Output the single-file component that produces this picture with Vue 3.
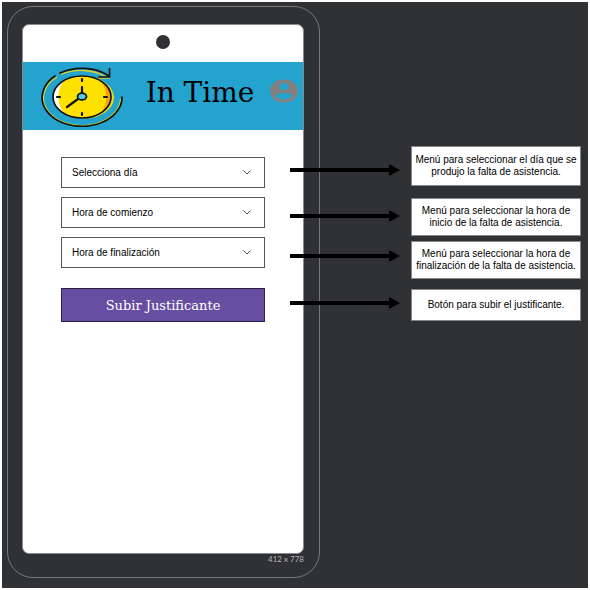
<script setup>
import { ref } from 'vue'

const fields = ref([
  { id: 'dia', label: 'Selecciona día', value: '' },
  { id: 'comienzo', label: 'Hora de comienzo', value: '' },
  { id: 'fin', label: 'Hora de finalización', value: '' }
])

const notes = [
  { text: ['Menú para seleccionar el día que se', 'produjo la falta de asistencia.'] },
  { text: ['Menú para seleccionar la hora de', 'inicio de la falta de asistencia.'] },
  { text: ['Menú para seleccionar la hora de', 'finalización de la falta de asistencia.'] },
  { text: ['Botón para subir el justificante.'] }
]
</script>

<template>
  <main class="board">
    <section class="phone">
      <div class="screen">
        <div class="status"><span class="camera"></span></div>
        <header class="bar">
          <svg class="logo" viewBox="0 0 84 62" fill="none" aria-hidden="true">
            <g stroke="#d8d422" stroke-width="1.3">
              <path d="M17 12A38.600 27.600 0 1 0 80.600 34" />
              <path d="M21 9.400A38.600 27.600 0 0 1 66 12" />
              <path d="M58 13.200h12" />
            </g>
            <ellipse cx="44.500" cy="32.500" rx="29.500" ry="21" fill="#e8dc10" />
            <ellipse cx="42" cy="32" rx="29" ry="21" fill="#ffe100" />
            <path d="M25 15C10 22 10 42 25 49C16 40 16 24 25 15Z" fill="#fff" />
            <path d="M61 16C74 24 74 40 61 48C68 38 68 26 61 16Z" fill="#ff9d13" />
            <g stroke="#111" stroke-width="1.7" stroke-linecap="round">
              <ellipse cx="42" cy="32" rx="29" ry="21" />
              <path d="M15 11A40 29 0 1 0 82 32" />
              <path d="M20 8A40 29 0 0 1 69 11" />
              <path d="M69.500 3.500V12H59" />
              <path d="M42 14v2M42 48v2M17 32h3M64 32h3M42 22v6M38 34 27 42" stroke-width="2.200" />
              <ellipse cx="42" cy="31.500" rx="4.500" ry="3.400" fill="#55cbe8" />
            </g>
          </svg>
          <h1 class="title">In Time</h1>
          <svg class="avatar" viewBox="0 0 28 24" aria-hidden="true">
            <ellipse cx="14" cy="12" rx="14" ry="11.500" fill="#808080" />
            <ellipse cx="14" cy="7.500" rx="4.200" ry="3.500" fill="#24a3cf" />
            <path d="M5.600 17C7.500 13 20.500 13 22.400 17C18.500 21.500 9.500 21.500 5.600 17Z" fill="#24a3cf" />
          </svg>
        </header>
        <form class="form" @submit.prevent>
          <div v-for="f in fields" :key="f.id" class="field">
            <select :id="f.id" v-model="f.value" class="select" :aria-label="f.label">
              <option value="">{{ f.label }}</option>
            </select>
            <svg class="chevron" viewBox="0 0 8 5" aria-hidden="true">
              <path d="M.5.5 4 4 7.500.5" fill="none" stroke="#555" />
            </svg>
          </div>
          <button class="submit" type="submit">Subir Justificante</button>
        </form>
      </div>
      <p class="size">412 x 778</p>
    </section>

    <div class="arrows" aria-hidden="true">
      <div v-for="(n, i) in notes" :key="i" class="arrow"></div>
    </div>

    <aside class="notes">
      <p v-for="(n, i) in notes" :key="i" class="note">
        <span v-for="line in n.text" :key="line" class="line">{{ line }}</span>
      </p>
    </aside>
  </main>
</template>

<style>
body {
  margin: 0;
  background: #fff;
}
</style>

<style scoped>
.board {
  display: flex;
  box-sizing: border-box;
  min-height: calc(100vh - 4px);
  margin: 2px;
  padding: 4px 7px 10px 5px;
  background: #303135;
  font-family: "Liberation Sans", Arial, sans-serif;
  font-size: 10px;
  color: #000;
}
.phone {
  display: flex;
  flex: 1 1 313px;
  flex-direction: column;
  box-sizing: border-box;
  padding: 17px 15px 12px 14px;
  border: 1px solid #77787b;
  border-radius: 26px;
}
.screen {
  flex: 1;
  overflow: hidden;
  border: 1px solid #8a8b8e;
  border-radius: 7px;
  background: #fff;
}
.status {
  display: flex;
  align-items: center;
  justify-content: center;
  box-sizing: border-box;
  height: 37px;
  padding-bottom: 3px;
}
.camera {
  width: 14px;
  height: 14px;
  border-radius: 50%;
  background: #303135;
}
.bar {
  display: flex;
  align-items: center;
  justify-content: space-between;
  box-sizing: border-box;
  height: 68px;
  padding: 0 5px 0 17px;
  background: #24a3cf;
}
.logo {
  width: 84px;
  height: 62px;
}
.title {
  margin: 0 0 6px 6px;
  font: 400 28px/32px "DejaVu Serif", serif;
}
.avatar {
  width: 28px;
  height: 24px;
  margin-bottom: 10px;
}
.form {
  display: flex;
  flex-direction: column;
  gap: 9px;
  padding: 27px 38px;
}
.field {
  display: grid;
  align-items: center;
}
.select {
  grid-area: 1 / 1;
  box-sizing: border-box;
  width: 100%;
  height: 31px;
  padding: 0 30px 0 10px;
  border: 1px solid #555;
  border-radius: 0;
  background: #fff;
  appearance: none;
  font: 10px "Liberation Sans", Arial, sans-serif;
  color: #000;
}
.chevron {
  grid-area: 1 / 1;
  justify-self: end;
  width: 8px;
  height: 5px;
  margin-right: 14px;
  pointer-events: none;
}
.submit {
  height: 34px;
  margin-top: 11px;
  padding: 0;
  border: 1px solid #2b2143;
  background: #674ea0;
  color: #fff;
  font: 13px "DejaVu Serif", serif;
}
.size {
  margin: 0;
  font: 8px/11px Lato, sans-serif;
  color: #b5b6b8;
  text-align: right;
}
.arrows {
  display: grid;
  flex: 0 0 110px;
  grid-template-rows: 46px 40px 47px 12px;
  z-index: 1;
  margin-left: -30px;
  padding-top: 158px;
}
.arrow {
  display: flex;
  align-items: center;
  height: 12px;
}
.arrow::before {
  flex: 1;
  height: 4px;
  background: #000;
  content: "";
}
.arrow::after {
  border-top: 6px solid transparent;
  border-bottom: 6px solid transparent;
  border-left: 11px solid #000;
  content: "";
}
.notes {
  display: grid;
  flex: 0 0 170px;
  grid-template-rows: 52px 43px 48px 32px;
  align-content: start;
  align-items: start;
  margin-left: 11px;
  padding-top: 140px;
}
.note {
  display: flex;
  flex-direction: column;
  justify-content: center;
  box-sizing: border-box;
  min-height: 32px;
  margin: 0;
  padding: 6px 0;
  border: 1px solid #85868a;
  background: #fff;
  line-height: 12px;
  text-align: center;
  white-space: nowrap;
}
.note:first-child {
  padding: 7px 0;
}
</style>
